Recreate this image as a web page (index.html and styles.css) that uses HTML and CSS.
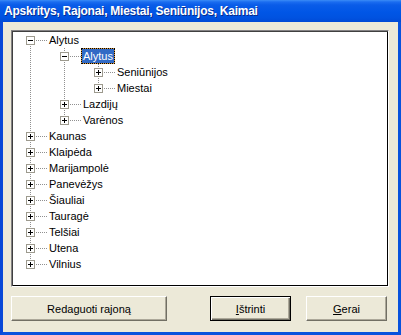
FILE: index.html
```html
<!DOCTYPE html>
<html>
<head>
<meta charset="utf-8">
<link rel="stylesheet" href="styles.css">
</head>
<body>
<div class="window">
  <div class="titlebar"><span class="title">Apskritys, Rajonai, Miestai, Seniūnijos, Kaimai</span></div>
  <div class="frame">
    <div class="tree">
      <div class="row">
        <svg class="cell" width="34" height="16"><line class="dot" x1="17.5" y1="8" x2="17.5" y2="16"/><line class="dot" x1="23" y1="8.5" x2="34" y2="8.5"/><rect class="box" x="13.5" y="4.5" width="8" height="8"/><line class="sign" x1="15" y1="8.5" x2="20" y2="8.5"/></svg>
        <span class="label">Alytus</span>
      </div>
      <div class="row">
        <svg class="cell" width="34" height="16"><line class="dot" x1="17.5" y1="0" x2="17.5" y2="16"/></svg>
        <svg class="cell" width="34" height="16"><line class="dot" x1="17.5" y1="0" x2="17.5" y2="16"/><line class="dot" x1="23" y1="8.5" x2="34" y2="8.5"/><rect class="box" x="13.5" y="4.5" width="8" height="8"/><line class="sign" x1="15" y1="8.5" x2="20" y2="8.5"/></svg>
        <span class="label sel">Alytus</span>
      </div>
      <div class="row">
        <svg class="cell" width="34" height="16"><line class="dot" x1="17.5" y1="0" x2="17.5" y2="16"/></svg>
        <svg class="cell" width="34" height="16"><line class="dot" x1="17.5" y1="0" x2="17.5" y2="16"/></svg>
        <svg class="cell" width="34" height="16"><line class="dot" x1="17.5" y1="0" x2="17.5" y2="16"/><line class="dot" x1="23" y1="8.5" x2="34" y2="8.5"/><rect class="box" x="13.5" y="4.5" width="8" height="8"/><line class="sign" x1="15" y1="8.5" x2="20" y2="8.5"/><line class="sign" x1="17.5" y1="6" x2="17.5" y2="11"/></svg>
        <span class="label">Seniūnijos</span>
      </div>
      <div class="row">
        <svg class="cell" width="34" height="16"><line class="dot" x1="17.5" y1="0" x2="17.5" y2="16"/></svg>
        <svg class="cell" width="34" height="16"><line class="dot" x1="17.5" y1="0" x2="17.5" y2="16"/></svg>
        <svg class="cell" width="34" height="16"><line class="dot" x1="17.5" y1="0" x2="17.5" y2="8"/><line class="dot" x1="23" y1="8.5" x2="34" y2="8.5"/><rect class="box" x="13.5" y="4.5" width="8" height="8"/><line class="sign" x1="15" y1="8.5" x2="20" y2="8.5"/><line class="sign" x1="17.5" y1="6" x2="17.5" y2="11"/></svg>
        <span class="label">Miestai</span>
      </div>
      <div class="row">
        <svg class="cell" width="34" height="16"><line class="dot" x1="17.5" y1="0" x2="17.5" y2="16"/></svg>
        <svg class="cell" width="34" height="16"><line class="dot" x1="17.5" y1="0" x2="17.5" y2="16"/><line class="dot" x1="23" y1="8.5" x2="34" y2="8.5"/><rect class="box" x="13.5" y="4.5" width="8" height="8"/><line class="sign" x1="15" y1="8.5" x2="20" y2="8.5"/><line class="sign" x1="17.5" y1="6" x2="17.5" y2="11"/></svg>
        <span class="label">Lazdijų</span>
      </div>
      <div class="row">
        <svg class="cell" width="34" height="16"><line class="dot" x1="17.5" y1="0" x2="17.5" y2="16"/></svg>
        <svg class="cell" width="34" height="16"><line class="dot" x1="17.5" y1="0" x2="17.5" y2="8"/><line class="dot" x1="23" y1="8.5" x2="34" y2="8.5"/><rect class="box" x="13.5" y="4.5" width="8" height="8"/><line class="sign" x1="15" y1="8.5" x2="20" y2="8.5"/><line class="sign" x1="17.5" y1="6" x2="17.5" y2="11"/></svg>
        <span class="label">Varėnos</span>
      </div>
      <div class="row">
        <svg class="cell" width="34" height="16"><line class="dot" x1="17.5" y1="0" x2="17.5" y2="16"/><line class="dot" x1="23" y1="8.5" x2="34" y2="8.5"/><rect class="box" x="13.5" y="4.5" width="8" height="8"/><line class="sign" x1="15" y1="8.5" x2="20" y2="8.5"/><line class="sign" x1="17.5" y1="6" x2="17.5" y2="11"/></svg>
        <span class="label">Kaunas</span>
      </div>
      <div class="row">
        <svg class="cell" width="34" height="16"><line class="dot" x1="17.5" y1="0" x2="17.5" y2="16"/><line class="dot" x1="23" y1="8.5" x2="34" y2="8.5"/><rect class="box" x="13.5" y="4.5" width="8" height="8"/><line class="sign" x1="15" y1="8.5" x2="20" y2="8.5"/><line class="sign" x1="17.5" y1="6" x2="17.5" y2="11"/></svg>
        <span class="label">Klaipėda</span>
      </div>
      <div class="row">
        <svg class="cell" width="34" height="16"><line class="dot" x1="17.5" y1="0" x2="17.5" y2="16"/><line class="dot" x1="23" y1="8.5" x2="34" y2="8.5"/><rect class="box" x="13.5" y="4.5" width="8" height="8"/><line class="sign" x1="15" y1="8.5" x2="20" y2="8.5"/><line class="sign" x1="17.5" y1="6" x2="17.5" y2="11"/></svg>
        <span class="label">Marijampolė</span>
      </div>
      <div class="row">
        <svg class="cell" width="34" height="16"><line class="dot" x1="17.5" y1="0" x2="17.5" y2="16"/><line class="dot" x1="23" y1="8.5" x2="34" y2="8.5"/><rect class="box" x="13.5" y="4.5" width="8" height="8"/><line class="sign" x1="15" y1="8.5" x2="20" y2="8.5"/><line class="sign" x1="17.5" y1="6" x2="17.5" y2="11"/></svg>
        <span class="label">Panevėžys</span>
      </div>
      <div class="row">
        <svg class="cell" width="34" height="16"><line class="dot" x1="17.5" y1="0" x2="17.5" y2="16"/><line class="dot" x1="23" y1="8.5" x2="34" y2="8.5"/><rect class="box" x="13.5" y="4.5" width="8" height="8"/><line class="sign" x1="15" y1="8.5" x2="20" y2="8.5"/><line class="sign" x1="17.5" y1="6" x2="17.5" y2="11"/></svg>
        <span class="label">Šiauliai</span>
      </div>
      <div class="row">
        <svg class="cell" width="34" height="16"><line class="dot" x1="17.5" y1="0" x2="17.5" y2="16"/><line class="dot" x1="23" y1="8.5" x2="34" y2="8.5"/><rect class="box" x="13.5" y="4.5" width="8" height="8"/><line class="sign" x1="15" y1="8.5" x2="20" y2="8.5"/><line class="sign" x1="17.5" y1="6" x2="17.5" y2="11"/></svg>
        <span class="label">Tauragė</span>
      </div>
      <div class="row">
        <svg class="cell" width="34" height="16"><line class="dot" x1="17.5" y1="0" x2="17.5" y2="16"/><line class="dot" x1="23" y1="8.5" x2="34" y2="8.5"/><rect class="box" x="13.5" y="4.5" width="8" height="8"/><line class="sign" x1="15" y1="8.5" x2="20" y2="8.5"/><line class="sign" x1="17.5" y1="6" x2="17.5" y2="11"/></svg>
        <span class="label">Telšiai</span>
      </div>
      <div class="row">
        <svg class="cell" width="34" height="16"><line class="dot" x1="17.5" y1="0" x2="17.5" y2="16"/><line class="dot" x1="23" y1="8.5" x2="34" y2="8.5"/><rect class="box" x="13.5" y="4.5" width="8" height="8"/><line class="sign" x1="15" y1="8.5" x2="20" y2="8.5"/><line class="sign" x1="17.5" y1="6" x2="17.5" y2="11"/></svg>
        <span class="label">Utena</span>
      </div>
      <div class="row">
        <svg class="cell" width="34" height="16"><line class="dot" x1="17.5" y1="0" x2="17.5" y2="8"/><line class="dot" x1="23" y1="8.5" x2="34" y2="8.5"/><rect class="box" x="13.5" y="4.5" width="8" height="8"/><line class="sign" x1="15" y1="8.5" x2="20" y2="8.5"/><line class="sign" x1="17.5" y1="6" x2="17.5" y2="11"/></svg>
        <span class="label">Vilnius</span>
      </div>
    </div>
    <div class="buttons">
      <button class="btn btn-wide">Redaguoti rajoną</button>
      <button class="btn btn-default"><u>I</u>štrinti</button>
      <button class="btn"><u>G</u>erai</button>
    </div>
  </div>
</div>
</body>
</html>
```

FILE: styles.css
```css
html, body {
  margin: 0;
  padding: 0;
  background: #ECE9D8;
}

.window {
  width: 401px;
  height: 335px;
  display: flex;
  flex-direction: column;
  overflow: hidden;
  font-family: "Liberation Sans", Arial, sans-serif;
}

.titlebar {
  height: 22px;
  box-sizing: border-box;
  padding: 0 0 0 4px;
  display: flex;
  align-items: center;
  background: linear-gradient(to bottom, #3B8CF6 0px, #1A6CF0 2px, #0A5CE8 5px, #0056E6 12px, #0052E0 18px, #0049D6 22px);
}

.title {
  color: #fff;
  font-weight: bold;
  font-size: 12px;
  letter-spacing: -0.25px;
  white-space: nowrap;
  text-shadow: 1px 1px 0 #0A2B8C;
}

.frame {
  flex: 1;
  display: flex;
  flex-direction: column;
  background: #ECE9D8;
  border: 3px solid #0852DD;
  border-top: 0;
  border-left-color: #0848D8;
  padding: 8px 9px 11px 8px;
}

.tree {
  height: 257px;
  box-sizing: border-box;
  background: #fff;
  border: 1px solid;
  border-color: #848284 #fff #fff #848284;
  box-shadow: inset 1px 1px 0 #404040, inset -1px -1px 0 #000;
  padding: 1px;
  display: flex;
  flex-direction: column;
}

.row {
  height: 16px;
  display: flex;
  align-items: stretch;
}

.cell {
  display: block;
  flex: none;
}

.dot {
  stroke: #909090;
  stroke-width: 1;
  stroke-dasharray: 1 1;
  shape-rendering: crispEdges;
}

.box {
  fill: #fff;
  stroke: #9D9A8E;
  stroke-width: 1;
  shape-rendering: crispEdges;
}

.sign {
  stroke: #000;
  stroke-width: 1;
  shape-rendering: crispEdges;
}

.label {
  font-size: 11px;
  line-height: 16px;
  padding: 0 2px;
  color: #000;
  white-space: nowrap;
}

.sel {
  color: #fff;
  line-height: 14px;
  padding: 0 1px;
  border: 1px dotted #000;
  background: linear-gradient(#316AC5, #316AC5) padding-box, linear-gradient(#D8963A, #D8963A) border-box;
}

.buttons {
  margin-top: 9px;
  height: 25px;
  display: flex;
  padding-right: 2px;
}

.btn {
  height: 25px;
  width: 81px;
  box-sizing: border-box;
  font-family: "Liberation Sans", Arial, sans-serif;
  font-size: 11px;
  color: #000;
  background: #ECE9D8;
  border: 1px solid;
  border-color: #fff #716F64 #716F64 #fff;
  box-shadow: inset -1px -1px 0 #ACA899;
  padding: 0;
  margin: 0;
}

.btn-wide {
  width: 156px;
  margin-right: auto;
}

.btn-default {
  margin-right: 15px;
  border: 1px solid #000;
  box-shadow: inset 1px 1px 0 #fff, inset -1px -1px 0 #716F64, inset -2px -2px 0 #ACA899;
}
```
